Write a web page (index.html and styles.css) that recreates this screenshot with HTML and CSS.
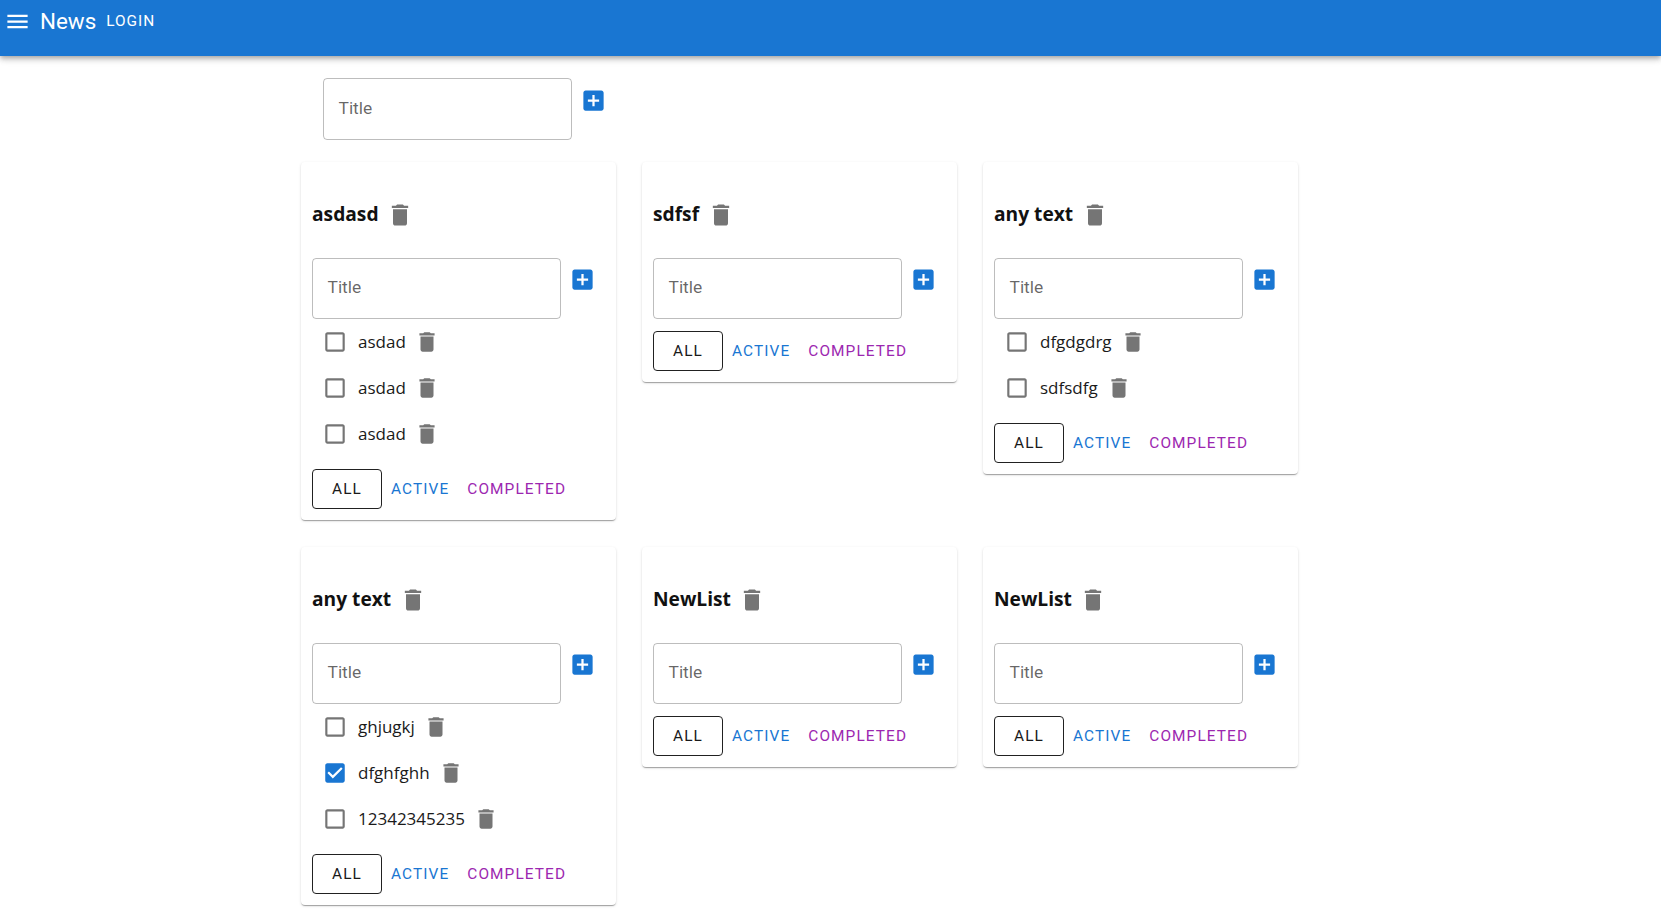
FILE: index.html
```html
<!DOCTYPE html>
<html lang="en">
<head>
<meta charset="utf-8">
<title>News</title>
<link rel="stylesheet" href="styles.css">
</head>
<body>
<svg class="sprite" aria-hidden="true">
  <symbol id="i-menu" viewBox="0 0 24 24"><path d="M3 18h18v-2H3v2zm0-5h18v-2H3v2zm0-7v2h18V6H3z"/></symbol>
  <symbol id="i-add" viewBox="0 0 24 24"><path d="M19 3H5c-1.11 0-2 .9-2 2v14c0 1.1.89 2 2 2h14c1.1 0 2-.9 2-2V5c0-1.1-.9-2-2-2zm-2 10h-4v4h-2v-4H7v-2h4V7h2v4h4v2z"/></symbol>
  <symbol id="i-del" viewBox="0 0 24 24"><path d="M6 19c0 1.1.9 2 2 2h8c1.1 0 2-.9 2-2V7H6v12zM19 4h-3.5l-1-1h-5l-1 1H5v2h14V4z"/></symbol>
  <symbol id="i-box" viewBox="0 0 24 24"><path d="M19 5v14H5V5h14m0-2H5c-1.1 0-2 .9-2 2v14c0 1.1.9 2 2 2h14c1.1 0 2-.9 2-2V5c0-1.1-.9-2-2-2z"/></symbol>
  <symbol id="i-check" viewBox="0 0 24 24"><path d="M19 3H5c-1.11 0-2 .9-2 2v14c0 1.1.89 2 2 2h14c1.1 0 2-.9 2-2V5c0-1.1-.9-2-2-2zm-9 14l-5-5 1.41-1.41L10 14.17l7.59-7.59L19 8l-9 9z"/></symbol>
</svg>

<header class="appbar">
  <svg class="menu-icon"><use href="#i-menu"/></svg>
  <span class="brand">News</span>
  <span class="login">LOGIN</span>
</header>

<main class="page">
  <form class="add-form top-form">
    <label class="field"><span class="field-label">Title</span><input class="field-input" type="text"></label>
    <svg class="add-icon"><use href="#i-add"/></svg>
  </form>

  <section class="grid">
    <article class="card">
      <h3 class="card-title"><span>asdasd</span><svg class="title-del"><use href="#i-del"/></svg></h3>
      <form class="add-form">
        <label class="field"><span class="field-label">Title</span><input class="field-input" type="text"></label>
        <svg class="add-icon"><use href="#i-add"/></svg>
      </form>
      <ul class="tasks">
        <li class="task"><svg class="box"><use href="#i-box"/></svg><span class="task-text">asdad</span><svg class="task-del"><use href="#i-del"/></svg></li>
        <li class="task"><svg class="box"><use href="#i-box"/></svg><span class="task-text">asdad</span><svg class="task-del"><use href="#i-del"/></svg></li>
        <li class="task"><svg class="box"><use href="#i-box"/></svg><span class="task-text">asdad</span><svg class="task-del"><use href="#i-del"/></svg></li>
      </ul>
      <div class="filters"><button class="btn btn-all">ALL</button><button class="btn btn-active">ACTIVE</button><button class="btn btn-done">COMPLETED</button></div>
    </article>

    <article class="card">
      <h3 class="card-title"><span>sdfsf</span><svg class="title-del"><use href="#i-del"/></svg></h3>
      <form class="add-form">
        <label class="field"><span class="field-label">Title</span><input class="field-input" type="text"></label>
        <svg class="add-icon"><use href="#i-add"/></svg>
      </form>
      <div class="filters"><button class="btn btn-all">ALL</button><button class="btn btn-active">ACTIVE</button><button class="btn btn-done">COMPLETED</button></div>
    </article>

    <article class="card">
      <h3 class="card-title"><span>any text</span><svg class="title-del"><use href="#i-del"/></svg></h3>
      <form class="add-form">
        <label class="field"><span class="field-label">Title</span><input class="field-input" type="text"></label>
        <svg class="add-icon"><use href="#i-add"/></svg>
      </form>
      <ul class="tasks">
        <li class="task"><svg class="box"><use href="#i-box"/></svg><span class="task-text">dfgdgdrg</span><svg class="task-del"><use href="#i-del"/></svg></li>
        <li class="task"><svg class="box"><use href="#i-box"/></svg><span class="task-text">sdfsdfg</span><svg class="task-del"><use href="#i-del"/></svg></li>
      </ul>
      <div class="filters"><button class="btn btn-all">ALL</button><button class="btn btn-active">ACTIVE</button><button class="btn btn-done">COMPLETED</button></div>
    </article>

    <article class="card">
      <h3 class="card-title"><span>any text</span><svg class="title-del"><use href="#i-del"/></svg></h3>
      <form class="add-form">
        <label class="field"><span class="field-label">Title</span><input class="field-input" type="text"></label>
        <svg class="add-icon"><use href="#i-add"/></svg>
      </form>
      <ul class="tasks">
        <li class="task"><svg class="box"><use href="#i-box"/></svg><span class="task-text">ghjugkj</span><svg class="task-del"><use href="#i-del"/></svg></li>
        <li class="task"><svg class="box checked"><use href="#i-check"/></svg><span class="task-text">dfghfghh</span><svg class="task-del"><use href="#i-del"/></svg></li>
        <li class="task"><svg class="box"><use href="#i-box"/></svg><span class="task-text">12342345235</span><svg class="task-del"><use href="#i-del"/></svg></li>
      </ul>
      <div class="filters"><button class="btn btn-all">ALL</button><button class="btn btn-active">ACTIVE</button><button class="btn btn-done">COMPLETED</button></div>
    </article>

    <article class="card">
      <h3 class="card-title"><span>NewList</span><svg class="title-del"><use href="#i-del"/></svg></h3>
      <form class="add-form">
        <label class="field"><span class="field-label">Title</span><input class="field-input" type="text"></label>
        <svg class="add-icon"><use href="#i-add"/></svg>
      </form>
      <div class="filters"><button class="btn btn-all">ALL</button><button class="btn btn-active">ACTIVE</button><button class="btn btn-done">COMPLETED</button></div>
    </article>

    <article class="card">
      <h3 class="card-title"><span>NewList</span><svg class="title-del"><use href="#i-del"/></svg></h3>
      <form class="add-form">
        <label class="field"><span class="field-label">Title</span><input class="field-input" type="text"></label>
        <svg class="add-icon"><use href="#i-add"/></svg>
      </form>
      <div class="filters"><button class="btn btn-all">ALL</button><button class="btn btn-active">ACTIVE</button><button class="btn btn-done">COMPLETED</button></div>
    </article>
  </section>
</main>
</body>
</html>
```
FILE: styles.css
```css
* { box-sizing: border-box; }

html, body { margin: 0; padding: 0; }

body {
  background: #fff;
  color: #1a1a1a;
  font-family: "Open Sans", "Noto Sans", sans-serif;
  overflow: hidden;
  height: 921px;
}

.sprite { display: none; }

.appbar {
  height: 56px;
  background: #1976d2;
  color: #fff;
  display: flex;
  align-items: flex-start;
  padding-left: 4px;
  box-shadow: 0 2px 4px -1px rgba(0,0,0,.2), 0 4px 5px 0 rgba(0,0,0,.14), 0 1px 10px 0 rgba(0,0,0,.12);
  font-family: Roboto, sans-serif;
}

.menu-icon {
  width: 27px;
  height: 27px;
  margin-top: 7.5px;
  fill: #fff;
  flex: none;
}

.brand {
  font-size: 22.4px;
  line-height: 30px;
  margin: 6px 0 0 9px;
}

.login {
  font-size: 15.4px;
  line-height: 24px;
  font-weight: 400;
  letter-spacing: 1px;
  margin: 9px 0 0 10px;
}

.page {
  margin-left: 301px;
  padding-top: 22px;
}

.add-form {
  display: flex;
  align-items: flex-start;
  gap: 8.4px;
  height: 61.5px;
}

.top-form {
  margin: 0 0 22px 22px;
}

.field {
  position: relative;
  display: block;
  width: 249px;
  height: 61.5px;
  flex: none;
}

.field-label {
  position: absolute;
  left: 15.5px;
  top: 17.5px;
  font: 400 17.4px/24px Roboto, sans-serif;
  color: rgba(0,0,0,.6);
}

.field-input {
  width: 100%;
  height: 100%;
  display: block;
  border: 1px solid rgba(0,0,0,.26);
  border-radius: 4px;
  background: transparent;
  outline: none;
  padding: 0 15px;
}

.add-icon {
  width: 27px;
  height: 27px;
  margin-top: 8.5px;
  fill: #1976d2;
  flex: none;
}

.grid {
  display: grid;
  grid-template-columns: repeat(3, 315px);
  column-gap: 26px;
  row-gap: 26.5px;
  align-items: start;
}

.card {
  background: #fff;
  border-radius: 4px;
  padding: 32px 11px 11px;
  box-shadow: 0 2px 1px -1px rgba(0,0,0,.2), 0 1px 1px 0 rgba(0,0,0,.14), 0 1px 3px 0 rgba(0,0,0,.12);
}

.card-title {
  display: flex;
  align-items: center;
  gap: 7.5px;
  height: 40px;
  margin: 0 0 24px;
  font-size: 19.2px;
  font-weight: 700;
  line-height: 40px;
  color: #111;
}

.title-del {
  width: 28px;
  height: 28px;
  fill: #757575;
  flex: none;
  margin-top: 2px;
}

.tasks {
  list-style: none;
  margin: 0;
  padding: 0;
}

.task {
  display: flex;
  align-items: center;
  height: 46px;
  padding-left: 10px;
  font-size: 17px;
}

.task-text {
  padding-bottom: 2px;
}

.box {
  width: 26px;
  height: 26px;
  fill: #757575;
  margin-right: 10px;
  flex: none;
}

.box.checked { fill: #1976d2; }

.task-del {
  width: 26px;
  height: 26px;
  fill: #757575;
  margin-left: 8.5px;
  flex: none;
}

.filters {
  display: flex;
  margin-top: 12px;
  height: 40px;
}

.btn {
  background: none;
  border: 0;
  padding: 0 9px;
  height: 40px;
  font: 400 15.4px/24px Roboto, sans-serif;
  letter-spacing: 1.1px;
  text-transform: uppercase;
}

.btn-all {
  width: 70px;
  color: #1a1a1a;
  border: 1px solid #212121;
  border-radius: 4px;
}

.btn-active { color: #1976d2; }
.btn-done { color: #9c27b0; }
```
